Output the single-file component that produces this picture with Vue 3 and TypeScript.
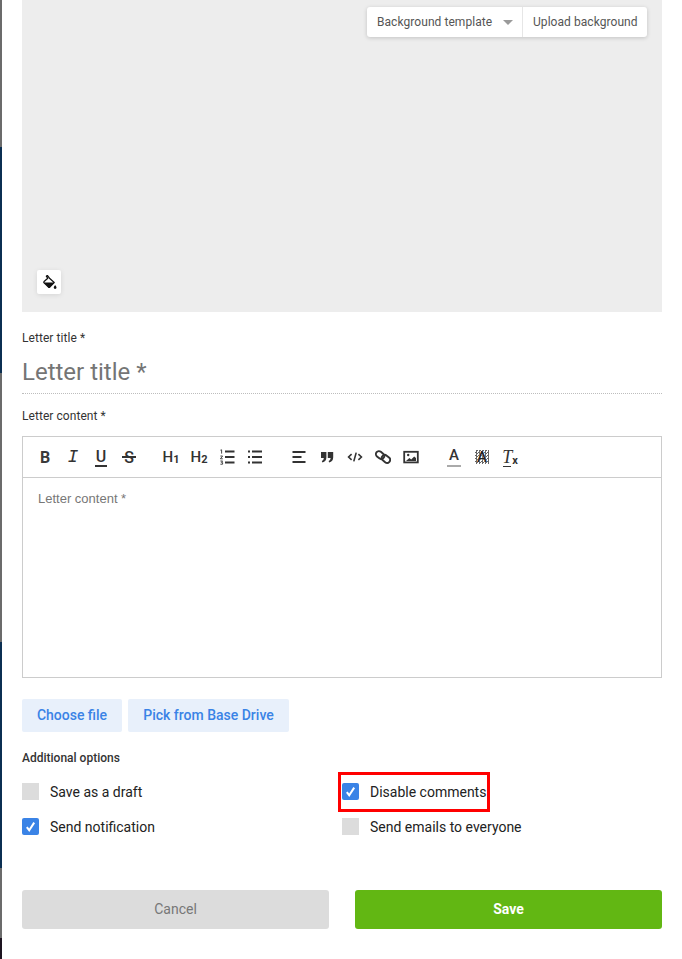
<script setup lang="ts">
interface Strip { color: string; height: number }
const strips: Strip[] = [
  { color: '#6b6b6b', height: 147 },
  { color: '#0b2f52', height: 226 },
  { color: '#6b6b6b', height: 269 },
  { color: '#0b2f52', height: 226 },
  { color: '#6b6b6b', height: 70 },
  { color: '#1d1420', height: 21 },
]
</script>

<template>
  <div class="page">
    <div class="backdrop">
      <div v-for="(s, i) in strips" :key="i" :style="{ background: s.color, height: s.height + 'px' }"></div>
    </div>
    <main class="modal">
      <section class="cover">
        <div class="cover-actions">
          <button class="cover-btn template">Background template<span class="caret"></span></button>
          <button class="cover-btn upload">Upload background</button>
        </div>
        <button class="paint" aria-label="Background colour">
          <svg width="15" height="15" viewBox="0 0 16 16">
            <path d="M4.6 1.2 L5.7 0.4 L8 3.4 L13 8 L8.3 13 Q7.6 13.6 6.9 13 L2.2 8.4 Q1.6 7.7 2.2 7 L6.2 3.5 Z" fill="#fff" stroke="#111" stroke-width="1.3" stroke-linejoin="round"/>
            <path d="M2 8 L13 8 L8.2 13 Q7.6 13.6 6.9 13 Z" fill="#111"/>
            <path d="M14 10.6 Q15.5 12.6 15.5 13.4 A1.5 1.5 0 0 1 12.5 13.4 Q12.5 12.6 14 10.6 Z" fill="#111"/>
          </svg>
        </button>
      </section>

      <label class="field-label title-label">Letter title *</label>
      <div class="title-input">Letter title *</div>

      <label class="field-label content-label">Letter content *</label>
      <div class="editor">
        <div class="toolbar">
          <div class="group">
            <span class="tool g-b">B</span>
            <span class="tool g-i">I</span>
            <span class="tool g-u">U<i class="u-bar"></i></span>
            <span class="tool g-s">S<i class="s-bar"></i></span>
          </div>
          <div class="group">
            <span class="tool g-h">H<small>1</small></span>
            <span class="tool g-h">H<small>2</small></span>
            <span class="tool">
              <svg width="16" height="16" viewBox="0 0 16 16" fill="none" stroke="#333" stroke-width="1.8">
                <path d="M6 2.5H15.5M6 8H15.5M6 13.5H15.5"/>
                <path d="M1.4 1.2L2.6 .8V4.6M1.4 7h2.2L1.4 9.8h2.4M1.4 12h2.2L2.4 13.4l1.2.2v1.6H1.4" stroke-width=".9"/>
              </svg>
            </span>
            <span class="tool">
              <svg width="16" height="16" viewBox="0 0 16 16" fill="none" stroke="#333" stroke-width="1.8">
                <path d="M5 2.5H15M5 8H15M5 13.5H15"/>
                <path d="M1 2.5H3M1 8H3M1 13.5H3"/>
              </svg>
            </span>
          </div>
          <div class="group">
            <span class="tool">
              <svg width="16" height="16" viewBox="0 0 16 16" fill="none" stroke="#333" stroke-width="1.9">
                <path d="M1.5 3H14.5M1.5 8H10.5M1.5 13H14.5"/>
              </svg>
            </span>
            <span class="tool">
              <svg width="16" height="16" viewBox="0 0 16 16" fill="#333">
                <path d="M2 3h5.4v5.2C7.4 11 6 12.7 3.4 13.4L2.8 12C4.1 11.4 4.8 10.4 4.8 9H2z"/>
                <path d="M8.8 3h5.4v5.2c0 2.8-1.4 4.5-4 5.2L9.6 12c1.3-.6 2-1.6 2-3H8.8z"/>
              </svg>
            </span>
            <span class="tool">
              <svg width="16" height="16" viewBox="0 0 16 16" fill="none" stroke="#333" stroke-width="1.6">
                <path d="M4.6 5.2L1.6 8l3 2.8M11.4 5.2l3 2.8-3 2.8"/>
                <path d="M9.2 3.6L6.8 12.4"/>
              </svg>
            </span>
            <span class="tool">
              <svg width="16" height="16" viewBox="0 0 16 16" fill="none" stroke="#333" stroke-width="1.9">
                <rect x="0.6" y="3" width="9" height="6" rx="3" transform="rotate(40 5 6)"/>
                <rect x="6.4" y="7" width="9" height="6" rx="3" transform="rotate(40 11 10)"/>
              </svg>
            </span>
            <span class="tool">
              <svg width="16" height="16" viewBox="0 0 16 16">
                <rect x="1.2" y="2.8" width="13.6" height="10.6" fill="#fff" stroke="#333" stroke-width="1.8"/>
                <path d="M3 12l3.4-3 1.8 1.4 3-3L13 9v3z" fill="#333"/>
                <circle cx="5.2" cy="6" r="1.2" fill="#333"/>
              </svg>
            </span>
          </div>
          <div class="group last">
            <span class="tool g-a"><span>A</span><i class="a-bar"></i></span>
            <span class="tool g-a"><i class="hatch"></i><span class="a-on">A</span></span>
            <span class="tool g-t">T<small>x</small><i class="t-bar"></i></span>
          </div>
        </div>
        <div class="editor-body">Letter content *</div>
      </div>

      <div class="attach">
        <button class="attach-btn choose">Choose file</button>
        <button class="attach-btn pick">Pick from Base Drive</button>
      </div>

      <h3 class="options-title">Additional options</h3>
      <div class="options">
        <div class="option">
          <span class="box"></span>Save as a draft
        </div>
        <div class="option highlighted">
          <span class="box on">
            <svg width="11" height="11" viewBox="0 0 11 11"><path d="M1.8 6.2L4.2 9.2L9.2 1.6" fill="none" stroke="#fff" stroke-width="2"/></svg>
          </span>Disable comments
          <span class="annotation"></span>
        </div>
        <div class="option">
          <span class="box on">
            <svg width="11" height="11" viewBox="0 0 11 11"><path d="M1.8 6.2L4.2 9.2L9.2 1.6" fill="none" stroke="#fff" stroke-width="2"/></svg>
          </span>Send notification
        </div>
        <div class="option">
          <span class="box"></span>Send emails to everyone
        </div>
      </div>

      <div class="footer">
        <button class="foot-btn cancel">Cancel</button>
        <button class="foot-btn save">Save</button>
      </div>
    </main>
  </div>
</template>

<style>
html, body { margin: 0; background: #fff; overflow: hidden; }
</style>

<style scoped>
.page {
  display: flex;
  width: 682px;
  height: 959px;
  font-family: Roboto, "Liberation Sans", sans-serif;
  overflow: hidden;
}
.backdrop { width: 2px; flex: none; }
.modal {
  flex: 1;
  padding: 0 20px 0 20px;
  box-sizing: border-box;
  display: flex;
  flex-direction: column;
}
button { font-family: inherit; border: 0; cursor: pointer; }

.cover {
  height: 312px;
  background: #ededed;
  position: relative;
  flex: none;
  display: flex;
  flex-direction: column;
  justify-content: space-between;
  padding: 7px 15px 18px;
  box-sizing: border-box;
}
.cover-actions {
  align-self: flex-end;
  display: flex;
  height: 30px;
  background: #fff;
  border-radius: 3px;
  box-shadow: 0 1px 4px rgba(0, 0, 0, 0.18);
}
.cover-btn {
  background: none;
  font-size: 12px;
  font-weight: 400;
  letter-spacing: 0.005em;
  color: #555;
  padding: 0 10px;
  display: flex;
  align-items: center;
  white-space: nowrap;
}
.template { width: 156px; border-right: 1px solid #e6e6e6; box-sizing: border-box; }
.upload { width: 124px; box-sizing: border-box; }
.caret {
  margin-left: 11px;
  border-left: 5px solid transparent;
  border-right: 5px solid transparent;
  border-top: 5px solid #9a9a9a;
}
.paint {
  width: 24px;
  height: 24px;
  align-self: flex-start;
  background: #fff;
  border-radius: 2px;
  box-shadow: 0 1px 5px rgba(0, 0, 0, 0.1);
  padding: 0;
  display: flex;
  align-items: center;
  justify-content: center;
}

.field-label {
  font-size: 12px;
  line-height: 14px;
  letter-spacing: 0.005em;
  color: #333;
  display: block;
}
.title-label { margin-top: 19px; }
.title-input {
  font-size: 24px;
  line-height: 28px;
  color: #757575;
  margin-top: 13px;
  height: 35px;
  border-bottom: 1px dotted #bdbdbd;
  box-sizing: content-box;
}
.content-label { margin-top: 15px; }
.editor {
  margin-top: 13px;
  height: 242px;
  box-sizing: border-box;
  border: 1px solid #ccc;
  display: flex;
  flex-direction: column;
  flex: none;
}
.toolbar {
  height: 41px;
  box-sizing: border-box;
  border-bottom: 1px solid #ccc;
  display: flex;
  align-items: center;
  padding-left: 8px;
  gap: 14px;
  flex: none;
}
.group { display: flex; }
.group:nth-child(3) { margin-left: 2px; }
.group.last { margin-left: 1px; }
.tool {
  width: 28px;
  height: 24px;
  display: flex;
  align-items: center;
  justify-content: center;
  position: relative;
  color: #333;
}
.g-b { font-weight: 700; font-size: 16px; color: #3a3a3a; }
.g-i { font-family: "Liberation Mono", monospace; font-style: italic; font-size: 18px; }
.g-u { font-size: 16px; font-weight: 500; padding-bottom: 2px; box-sizing: border-box; }
.u-bar {
  position: absolute;
  left: 8px;
  bottom: 2px;
  width: 12px;
  height: 2px;
  background: #333;
}
.g-s { font-size: 16px; font-weight: 500; }
.s-bar {
  position: absolute;
  left: 7px;
  top: 11px;
  width: 14px;
  height: 1.5px;
  background: #333;
}
.g-h { font-size: 15px; font-weight: 500; }
.g-h small { font-size: 11px; font-weight: 700; position: relative; top: 2px; }
.g-a { font-size: 15px; font-weight: 500; }
.g-a > span { position: relative; top: -2px; }
.g-a > .a-on { top: 0; text-shadow: 0 0 1px #fff; color: #222; }
.a-bar {
  position: absolute;
  left: 7px;
  bottom: 2px;
  width: 14px;
  height: 2px;
  background: #aaa;
}
.hatch {
  position: absolute;
  left: 7px;
  top: 5px;
  width: 14px;
  height: 14px;
  background: repeating-conic-gradient(#666 0 25%, #fff 0 50%) 0 0 / 3px 3px;
}
.g-t { font-family: "Liberation Serif", serif; font-style: italic; font-size: 18px; }
.g-t small { font-family: Roboto, sans-serif; font-size: 11px; font-weight: 700; font-style: normal; position: relative; top: 3px; }
.t-bar {
  position: absolute;
  left: 7px;
  bottom: 2px;
  width: 8px;
  height: 1.5px;
  background: #333;
}
.editor-body {
  padding: 13px 15px;
  font-family: "Liberation Sans", sans-serif;
  font-size: 13px;
  line-height: 15px;
  color: #777;
}

.attach { display: flex; gap: 6px; margin-top: 21px; }
.attach-btn {
  height: 33px;
  background: #e8f0fb;
  color: #3a83e6;
  font-size: 14px;
  font-weight: 500;
  border-radius: 2px;
  padding: 0 0 2px;
}
.choose { width: 100px; }
.pick { width: 161px; }
.options-title {
  margin: 19px 0 0;
  font-size: 12px;
  line-height: 14px;
  font-weight: 500;
  color: #333;
}
.options {
  display: grid;
  grid-template-columns: 320px 320px;
  row-gap: 18px;
  margin-top: 18px;
}
.option {
  display: flex;
  align-items: center;
  height: 17px;
  font-size: 14px;
  color: #222;
  position: relative;
}
.box {
  width: 17px;
  height: 17px;
  background: #dcdcdc;
  margin-right: 11px;
  flex: none;
  display: flex;
  align-items: center;
  justify-content: center;
}
.box.on { background: #3a83e6; border-radius: 2px; }
.annotation {
  position: absolute;
  left: -4px;
  top: -11px;
  width: 152px;
  height: 40px;
  box-sizing: border-box;
  border: 3px solid #f00;
}
.footer {
  display: grid;
  grid-template-columns: 307px 307px;
  column-gap: 26px;
  margin-top: 55px;
}
.foot-btn {
  height: 39px;
  border-radius: 3px;
  font-size: 14px;
  padding: 0 0 2px;
}
.cancel { background: #dcdcdc; color: #777; }
.save { background: #62b713; color: #fff; font-weight: 700; }
</style>
